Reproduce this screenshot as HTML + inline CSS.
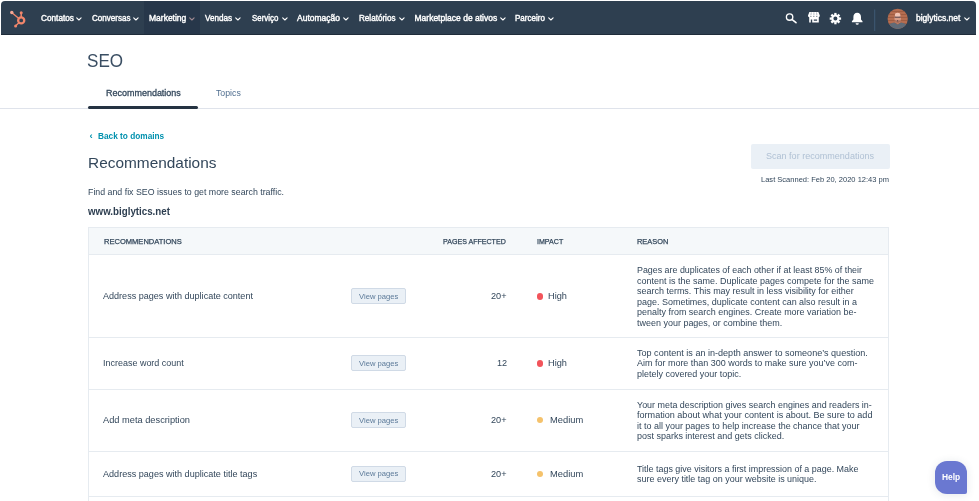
<!DOCTYPE html>
<html lang="en">
<head>
<meta charset="utf-8">
<title>SEO Recommendations</title>
<style>
*{box-sizing:border-box;margin:0;padding:0}
html,body{width:979px;height:501px;overflow:hidden;background:#fff}
body{font-family:"Liberation Sans",sans-serif;color:#33475b;position:relative}
.t{position:absolute;white-space:nowrap;line-height:1;z-index:2;transform-origin:0 50%}
#nav{position:absolute;left:1px;top:1px;width:975px;height:34px;background:#2e3f50;border-radius:4px 4px 0 0;border-bottom:1px solid #1f2c3a}
#act{position:absolute;left:144px;top:1px;width:56px;height:33px;background:#27374a}
.cv{position:absolute;top:17px;z-index:2}
#hline{position:absolute;left:0;top:107.7px;width:979px;height:1.3px;background:#dfe3eb}
#tabline{position:absolute;left:88px;top:105.7px;width:110px;height:3.4px;background:#253342;border-radius:2px}
.vb{position:absolute;left:350.7px;width:55.5px;height:15.7px;background:#eaf0f6;border:1px solid #d0dae6;border-radius:2px}
.rl{position:absolute;left:88px;width:801px;height:1px;background:#e6ebf0}
.dot{position:absolute;left:536.7px;width:6.6px;height:6.6px;border-radius:50%}
</style>
</head>
<body>
<div id="nav"></div>
<div id="act"></div>
<svg style="position:absolute;left:8px;top:9px;z-index:2" width="20" height="20" viewBox="8 9 20 20">
  <g fill="none" stroke="#f2866b" stroke-linecap="round">
    <circle cx="21.2" cy="20.4" r="3.05" stroke-width="2.3"/>
    <line x1="21.2" y1="17" x2="21.2" y2="13.2" stroke-width="1.5"/>
    <line x1="18.6" y1="18.2" x2="12.2" y2="13" stroke-width="1.35"/>
    <line x1="18.9" y1="22.8" x2="16" y2="25.6" stroke-width="1.35"/>
  </g>
  <circle cx="21.2" cy="12.7" r="1.5" fill="#f2866b"/>
  <circle cx="11.8" cy="12.5" r="1.7" fill="#f7a794"/>
  <circle cx="15.6" cy="26" r="1.5" fill="#f2866b"/>
</svg>
<svg class="cv" style="left:76.25px" width="6" height="4" viewBox="0 0 6 4"><path d="M0.7 0.8 L2.9 3 L5.1 0.8" fill="none" stroke="#fff" stroke-width="1.1" stroke-linecap="round" stroke-linejoin="round"/></svg>
<svg class="cv" style="left:133px" width="6" height="4" viewBox="0 0 6 4"><path d="M0.7 0.8 L2.9 3 L5.1 0.8" fill="none" stroke="#fff" stroke-width="1.1" stroke-linecap="round" stroke-linejoin="round"/></svg>
<svg class="cv" style="left:189px" width="6" height="4" viewBox="0 0 6 4"><path d="M0.7 0.8 L2.9 3 L5.1 0.8" fill="none" stroke="#a08a92" stroke-width="1.1" stroke-linecap="round" stroke-linejoin="round"/></svg>
<svg class="cv" style="left:235px" width="6" height="4" viewBox="0 0 6 4"><path d="M0.7 0.8 L2.9 3 L5.1 0.8" fill="none" stroke="#fff" stroke-width="1.1" stroke-linecap="round" stroke-linejoin="round"/></svg>
<svg class="cv" style="left:281.75px" width="6" height="4" viewBox="0 0 6 4"><path d="M0.7 0.8 L2.9 3 L5.1 0.8" fill="none" stroke="#fff" stroke-width="1.1" stroke-linecap="round" stroke-linejoin="round"/></svg>
<svg class="cv" style="left:343px" width="6" height="4" viewBox="0 0 6 4"><path d="M0.7 0.8 L2.9 3 L5.1 0.8" fill="none" stroke="#fff" stroke-width="1.1" stroke-linecap="round" stroke-linejoin="round"/></svg>
<svg class="cv" style="left:398.75px" width="6" height="4" viewBox="0 0 6 4"><path d="M0.7 0.8 L2.9 3 L5.1 0.8" fill="none" stroke="#fff" stroke-width="1.1" stroke-linecap="round" stroke-linejoin="round"/></svg>
<svg class="cv" style="left:499.8px" width="6" height="4" viewBox="0 0 6 4"><path d="M0.7 0.8 L2.9 3 L5.1 0.8" fill="none" stroke="#fff" stroke-width="1.1" stroke-linecap="round" stroke-linejoin="round"/></svg>
<svg class="cv" style="left:548px" width="6" height="4" viewBox="0 0 6 4"><path d="M0.7 0.8 L2.9 3 L5.1 0.8" fill="none" stroke="#fff" stroke-width="1.1" stroke-linecap="round" stroke-linejoin="round"/></svg>
<svg class="cv" style="left:964px" width="6" height="4" viewBox="0 0 6 4"><path d="M0.7 0.8 L2.9 3 L5.1 0.8" fill="none" stroke="#fff" stroke-width="1.1" stroke-linecap="round" stroke-linejoin="round"/></svg>
<!-- nav icons -->
<svg style="position:absolute;left:780px;top:8px;z-index:2" width="130" height="24" viewBox="780 8 130 24">
  <!-- search -->
  <circle cx="789.6" cy="17" r="3.2" fill="none" stroke="#fff" stroke-width="1.35"/>
  <line x1="792.2" y1="19.6" x2="796" y2="22.7" stroke="#fff" stroke-width="1.6" stroke-linecap="round"/>
  <!-- marketplace -->
  <path d="M809.4 12.1 h9 l1.4 3.4 a1.45 1.45 0 0 1 -2.95 0.3 a1.45 1.45 0 0 1 -2.95 0 a1.45 1.45 0 0 1 -2.95 0 a1.45 1.45 0 0 1 -2.95 -0.3 z" fill="#fff"/>
  <g stroke="#7d8a98" stroke-width="0.55"><line x1="811.3" y1="12.3" x2="810.9" y2="15.4"/><line x1="813.9" y1="12.3" x2="813.9" y2="15.4"/><line x1="816.5" y1="12.3" x2="816.9" y2="15.4"/></g>
  <path d="M809.2 16.9 h9.6 v5.7 h-9.6 z M810.8 19.5 v3.1 h1.4 v-3.1 z M813.8 19.4 v1.3 h3.3 v-1.3 z" fill="#fff" fill-rule="evenodd"/>
  <!-- gear -->
  <g transform="translate(835.4 18.6)">
    <circle r="3.1" fill="none" stroke="#fff" stroke-width="2.2"/>
    <g stroke="#fff" stroke-width="2.3">
      <line x1="0" y1="-5.7" x2="0" y2="-3.6"/><line x1="0" y1="5.7" x2="0" y2="3.6"/>
      <line x1="-5.7" y1="0" x2="-3.6" y2="0"/><line x1="5.7" y1="0" x2="3.6" y2="0"/>
      <line x1="-4.03" y1="-4.03" x2="-2.55" y2="-2.55"/><line x1="4.03" y1="4.03" x2="2.55" y2="2.55"/>
      <line x1="-4.03" y1="4.03" x2="-2.55" y2="2.55"/><line x1="4.03" y1="-4.03" x2="2.55" y2="-2.55"/>
    </g>
  </g>
  <!-- bell -->
  <path d="M857.2 12.7 C859.6 12.7 861 14.6 861 17 L861 19.4 L862.5 21.3 L862.5 22.3 L851.9 22.3 L851.9 21.3 L853.4 19.4 L853.4 17 C853.4 14.6 854.8 12.7 857.2 12.7 Z" fill="#fff"/>
  <path d="M855.6 23.2 h3.2 a1.6 1.6 0 0 1 -3.2 0 z" fill="#fff"/>
  <!-- divider -->
  <rect x="874.2" y="9.5" width="1" height="21.5" fill="#3f5a76"/>
  <!-- avatar -->
  <defs><clipPath id="av"><circle cx="897.7" cy="18.8" r="10.1"/></clipPath></defs>
  <g clip-path="url(#av)">
    <rect x="887" y="8" width="22" height="22" fill="#b56d50"/>
    <g stroke="#8f5238" stroke-width="0.7" opacity=".8"><line x1="887" y1="11.5" x2="909" y2="11.5"/><line x1="887" y1="14.5" x2="909" y2="14.5"/><line x1="887" y1="17.5" x2="909" y2="17.5"/><line x1="887" y1="20.5" x2="909" y2="20.5"/><line x1="887" y1="23.5" x2="909" y2="23.5"/></g>
    <path d="M887 31 v-5 q3.5 -3.2 7.2 -3.6 l3.5 2 l3.5 -2 q3.7 .4 7.3 3.6 v5z" fill="#5f6b78"/>
    <ellipse cx="897.7" cy="18.3" rx="3.2" ry="5.4" fill="#d79c86"/>
    <ellipse cx="897.6" cy="15" rx="2.7" ry="2.2" fill="#f1c3b2"/>
    <rect x="894.7" y="16.6" width="6" height="1.2" fill="#3d3340" opacity=".75"/>
    <path d="M895 20 q2.7 1.2 5.4 0 v1.6 q-2.7 3.6 -5.4 0z" fill="#a86f5c"/>
    <circle cx="897.6" cy="20.8" r="0.7" fill="#3d3340" opacity=".7"/>
  </g>
</svg>

<div id="hline"></div>
<div id="tabline"></div>

<div style="position:absolute;left:750.5px;top:144px;width:139px;height:24.5px;background:#eaf0f6;border-radius:2px"></div>

<div style="position:absolute;left:88px;top:227px;width:801px;height:28px;background:#f5f8fa;border:1px solid #e6ebf0"></div>
<div style="position:absolute;left:88px;top:255px;width:1px;height:246px;background:#e6ebf0"></div>
<div style="position:absolute;left:888px;top:255px;width:1px;height:246px;background:#e6ebf0"></div>
<div class="vb" style="top:288.0px"></div>
<div class="dot" style="top:293.05px;background:#f2545b"></div>
<div class="vb" style="top:355.4px"></div>
<div class="dot" style="top:360.20px;background:#f2545b"></div>
<div class="vb" style="top:412.3px"></div>
<div class="dot" style="top:416.80px;background:#f5c26b"></div>
<div class="vb" style="top:466.2px"></div>
<div class="dot" style="top:470.50px;background:#f5c26b"></div>
<div class="rl" style="top:337px"></div>
<div class="rl" style="top:388.6px"></div>
<div class="rl" style="top:450.6px"></div>
<div class="rl" style="top:496px"></div>
<div style="position:absolute;left:935.3px;top:461px;width:32px;height:32.6px;background:#6a78d1;border-radius:12px 12px 2px 12px;box-shadow:0 1px 8px rgba(45,62,80,.12)"></div>
<div id="txt" style="position:absolute;left:0;top:0;width:979px;height:501px;will-change:transform;z-index:3">
<div class="t" style="left:40.50px;top:14.00px;font-size:8.5px;color:#ffffff;transform:scaleX(0.9681);-webkit-text-stroke:0.4px #fff;">Contatos</div>
<div class="t" style="left:92.00px;top:14.00px;font-size:8.5px;color:#ffffff;transform:scaleX(0.9453);-webkit-text-stroke:0.4px #fff;">Conversas</div>
<div class="t" style="left:149.00px;top:14.00px;font-size:8.5px;color:#ffffff;transform:scaleX(1.0000);-webkit-text-stroke:0.4px #fff;">Marketing</div>
<div class="t" style="left:205.00px;top:14.00px;font-size:8.5px;color:#ffffff;transform:scaleX(0.9538);-webkit-text-stroke:0.4px #fff;">Vendas</div>
<div class="t" style="left:251.75px;top:14.00px;font-size:8.5px;color:#ffffff;transform:scaleX(0.9281);-webkit-text-stroke:0.4px #fff;">Serviço</div>
<div class="t" style="left:297.00px;top:14.00px;font-size:8.5px;color:#ffffff;transform:scaleX(1.0000);-webkit-text-stroke:0.4px #fff;">Automação</div>
<div class="t" style="left:358.75px;top:14.00px;font-size:8.5px;color:#ffffff;transform:scaleX(0.9532);-webkit-text-stroke:0.4px #fff;">Relatórios</div>
<div class="t" style="left:414.50px;top:14.00px;font-size:8.5px;color:#ffffff;transform:scaleX(1.0000);-webkit-text-stroke:0.4px #fff;">Marketplace de ativos</div>
<div class="t" style="left:515.00px;top:14.00px;font-size:8.5px;color:#ffffff;transform:scaleX(0.9437);-webkit-text-stroke:0.4px #fff;">Parceiro</div>
<div class="t" style="left:916.00px;top:14.00px;font-size:8.5px;color:#ffffff;transform:scaleX(1.0000);-webkit-text-stroke:0.4px #fff;">biglytics.net</div>
<div class="t" style="left:87.04px;top:51.96px;font-size:18px;color:#3a4e63;transform:scaleX(0.9492);">SEO</div>
<div class="t" style="left:105.50px;top:88.04px;font-size:9.4px;transform:scaleX(0.9574);-webkit-text-stroke:0.3px #33475b;">Recommendations</div>
<div class="t" style="left:216.00px;top:88.04px;font-size:9.4px;color:#516f90;transform:scaleX(0.9333);">Topics</div>
<div class="t" style="left:89.50px;top:130.96px;font-size:9.5px;font-weight:bold;color:#0091ae;transform:scaleX(1.0000);">‹</div>
<div class="t" style="left:97.70px;top:132.01px;font-size:9.2px;font-weight:bold;color:#0091ae;transform:scaleX(0.9004);">Back to domains</div>
<div class="t" style="left:88.10px;top:156.04px;font-size:14.6px;transform:scaleX(1.0558);">Recommendations</div>
<div class="t" style="left:88.00px;top:188.01px;font-size:9.2px;transform:scaleX(0.9581);">Find and fix SEO issues to get more search traffic.</div>
<div class="t" style="left:88.00px;top:206.94px;font-size:10px;font-weight:bold;color:#2d3e50;transform:scaleX(0.9743);">www.biglytics.net</div>
<div class="t" style="left:766.00px;top:151.98px;font-size:9px;color:#b0c1d4;transform:scaleX(1.0042);">Scan for recommendations</div>
<div class="t" style="left:761.00px;top:175.98px;font-size:7.7px;transform:scaleX(0.9787);">Last Scanned: Feb 20, 2020 12:43 pm</div>
<div class="t" style="left:103.50px;top:237.95px;font-size:7.5px;transform:scaleX(1.0059);-webkit-text-stroke:0.25px #33475b;">RECOMMENDATIONS</div>
<div class="t" style="left:443.00px;top:237.95px;font-size:7.5px;transform:scaleX(0.9430);-webkit-text-stroke:0.25px #33475b;">PAGES AFFECTED</div>
<div class="t" style="left:536.75px;top:237.95px;font-size:7.5px;transform:scaleX(0.9439);-webkit-text-stroke:0.25px #33475b;">IMPACT</div>
<div class="t" style="left:636.80px;top:237.95px;font-size:7.5px;transform:scaleX(0.9889);-webkit-text-stroke:0.25px #33475b;">REASON</div>
<div class="t" style="left:103.10px;top:291.93px;font-size:9.0px;transform:scaleX(1.0057);">Address pages with duplicate content</div>
<div class="t" style="left:358.75px;top:293.02px;font-size:7.6px;color:#5c7a99;transform:scaleX(1.0059);">View pages</div>
<div class="t" style="left:490.50px;top:291.93px;font-size:9.0px;transform:scaleX(1.0181);">20+</div>
<div class="t" style="left:548.00px;top:291.93px;font-size:9.0px;transform:scaleX(1.0204);">High</div>
<div class="t" style="left:103.10px;top:359.08px;font-size:9.0px;transform:scaleX(0.9968);">Increase word count</div>
<div class="t" style="left:358.75px;top:359.97px;font-size:7.6px;color:#5c7a99;transform:scaleX(1.0059);">View pages</div>
<div class="t" style="left:496.80px;top:359.08px;font-size:9.0px;transform:scaleX(1.0130);">12</div>
<div class="t" style="left:548.00px;top:359.08px;font-size:9.0px;transform:scaleX(1.0204);">High</div>
<div class="t" style="left:103.10px;top:416.08px;font-size:9.0px;transform:scaleX(1.0287);">Add meta description</div>
<div class="t" style="left:358.75px;top:416.97px;font-size:7.6px;color:#5c7a99;transform:scaleX(1.0059);">View pages</div>
<div class="t" style="left:490.50px;top:416.08px;font-size:9.0px;transform:scaleX(1.0181);">20+</div>
<div class="t" style="left:549.84px;top:416.08px;font-size:9.0px;transform:scaleX(1.0360);">Medium</div>
<div class="t" style="left:103.10px;top:469.98px;font-size:9.0px;transform:scaleX(1.0071);">Address pages with duplicate title tags</div>
<div class="t" style="left:358.75px;top:470.07px;font-size:7.6px;color:#5c7a99;transform:scaleX(1.0059);">View pages</div>
<div class="t" style="left:490.50px;top:469.98px;font-size:9.0px;transform:scaleX(1.0181);">20+</div>
<div class="t" style="left:549.84px;top:469.98px;font-size:9.0px;transform:scaleX(1.0360);">Medium</div>
<div class="t" style="left:637.00px;top:266.28px;font-size:9.0px;transform:scaleX(0.9859);">Pages are duplicates of each other if at least 85% of their</div>
<div class="t" style="left:637.00px;top:277.38px;font-size:9.0px;transform:scaleX(0.9992);">content is the same. Duplicate pages compete for the same</div>
<div class="t" style="left:637.00px;top:287.28px;font-size:9.0px;transform:scaleX(0.9970);">search terms. This may result in less visibility for either</div>
<div class="t" style="left:637.00px;top:298.38px;font-size:9.0px;transform:scaleX(0.9970);">page. Sometimes, duplicate content can also result in a</div>
<div class="t" style="left:637.00px;top:308.28px;font-size:9.0px;transform:scaleX(0.9970);">penalty from search engines. Create more variation be-</div>
<div class="t" style="left:637.00px;top:318.98px;font-size:9.0px;transform:scaleX(0.9970);">tween your pages, or combine them.</div>
<div class="t" style="left:637.00px;top:349.28px;font-size:9.0px;transform:scaleX(1.0059);">Top content is an in-depth answer to someone’s question.</div>
<div class="t" style="left:637.00px;top:359.38px;font-size:9.0px;transform:scaleX(0.9970);">Aim for more than 300 words to make sure you’ve com-</div>
<div class="t" style="left:637.00px;top:370.08px;font-size:9.0px;transform:scaleX(0.9970);">pletely covered your topic.</div>
<div class="t" style="left:637.00px;top:401.28px;font-size:9.0px;transform:scaleX(0.9913);">Your meta description gives search engines and readers in-</div>
<div class="t" style="left:637.00px;top:411.38px;font-size:9.0px;transform:scaleX(1.0077);">formation about what your content is about. Be sure to add</div>
<div class="t" style="left:637.00px;top:422.28px;font-size:9.0px;transform:scaleX(0.9970);">it to all your pages to help increase the chance that your</div>
<div class="t" style="left:637.00px;top:431.98px;font-size:9.0px;transform:scaleX(0.9970);">post sparks interest and gets clicked.</div>
<div class="t" style="left:637.00px;top:465.38px;font-size:9.0px;transform:scaleX(0.9919);">Title tags give visitors a first impression of a page. Make</div>
<div class="t" style="left:637.00px;top:475.08px;font-size:9.0px;transform:scaleX(0.9970);">sure every title tag on your website is unique.</div>
<div class="t" style="left:942.00px;top:472.92px;font-size:8.6px;font-weight:bold;color:#ffffff;transform:scaleX(0.9770);">Help</div>
</div>
</body>
</html>
